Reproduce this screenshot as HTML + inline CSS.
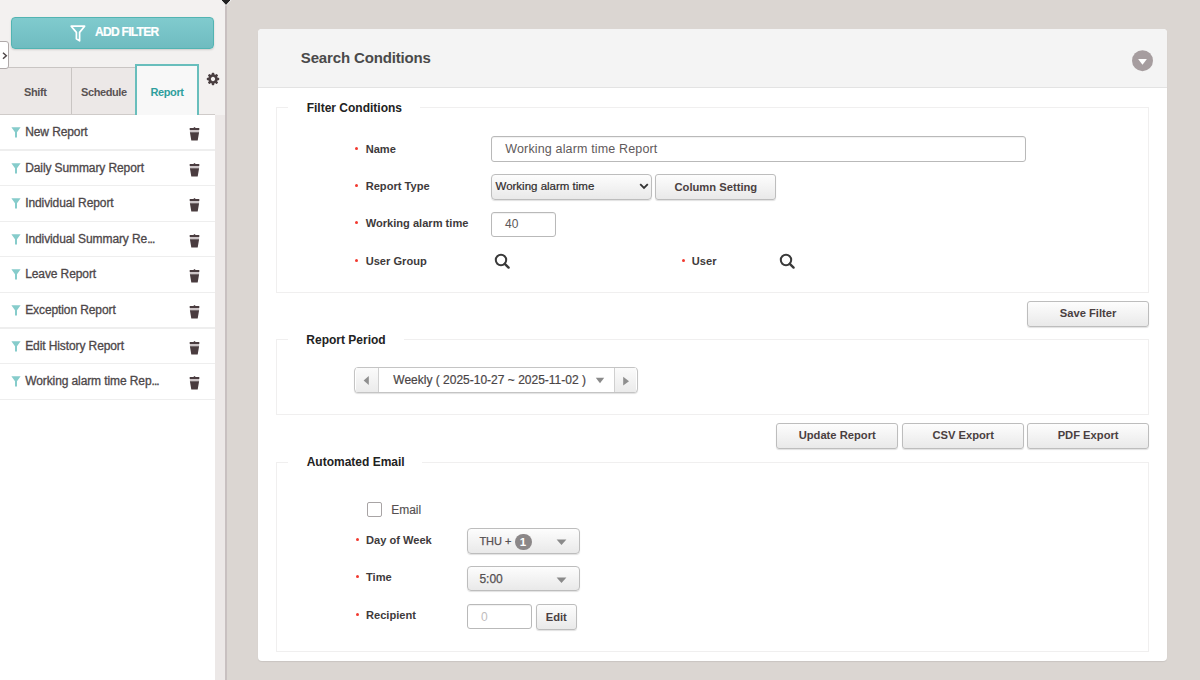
<!DOCTYPE html>
<html><head><meta charset="utf-8">
<style>
*{box-sizing:border-box;margin:0;padding:0}
html,body{width:1200px;height:680px;overflow:hidden;background:#dbd6d2;font-family:"Liberation Sans",sans-serif;position:relative}
.a{position:absolute}
.t{position:absolute;line-height:1;white-space:nowrap}
#side{left:0;top:0;width:226px;height:680px;background:#f3f1f0}
#sline{left:225px;top:0;width:2px;height:680px;background:#c8c0c0}
#strip{left:215px;top:115px;width:10px;height:565px;background:#ece8e7}
#addbtn{left:11px;top:16.8px;width:203.3px;height:31.9px;border:1.8px solid #52b4b2;border-radius:4px;background:linear-gradient(#80cbce,#6fbcc0);box-shadow:0 1px 2px rgba(0,0,0,.15)}
.tab{top:66.5px;height:48.5px;background:#ece8e7;border-top:1px solid #c9c5c3;border-right:1px solid #c9c5c3}
.tabtx{font-size:11px;font-weight:700;color:#5a5354;letter-spacing:-0.4px}
#list{left:0;top:115px;width:215px;height:565px;background:#fff}
.row{left:0;width:215px;height:1.4px;background:#eeeeee}
.item{font-size:12px;color:#4d4749;letter-spacing:-0.1px;-webkit-text-stroke:0.3px #4d4749}
.panel{left:258px;top:29px;width:909px;height:632px;background:#fff;border-radius:4px;box-shadow:0 1px 1px rgba(0,0,0,.08)}
.fs{border:1px solid #f0efef}
.leg{font-size:12px;font-weight:700;color:#222}
.lab{font-size:11.2px;font-weight:700;color:#3e3a3b}
.dot{width:3px;height:3px;border-radius:50%;background:#f2392f}
.inp{border:1px solid #b9b9b9;border-radius:3px;background:#fff;box-shadow:inset 0 1px 1px rgba(0,0,0,.06)}
.btn{border:1px solid #bdbdbd;border-radius:3px;background:linear-gradient(#fdfdfd,#e9e9e9);box-shadow:0 1px 1px rgba(0,0,0,.12)}
.btx{font-size:11.2px;font-weight:700;color:#4a3f41;text-align:center}
</style></head><body>
<!-- sidebar -->
<div class="a" id="side"></div>
<div class="a" id="list"></div>
<div class="a" id="strip"></div>
<div class="a" id="sline"></div>
<svg class="a" style="left:219px;top:0" width="14" height="7" viewBox="0 0 14 7"><path d="M1 -1 L13 -1 L7 5.5 Z" fill="#222" stroke="#fff" stroke-width="1"/></svg>

<div class="a" id="addbtn"></div>
<svg class="a" style="left:70px;top:25px" width="16" height="17" viewBox="0 0 16 17"><path d="M1.2 1.2 H14.6 L9.6 7.4 V15.8 L6.4 13.8 V7.4 Z" fill="none" stroke="#fff" stroke-width="1.7" stroke-linejoin="round"/></svg>
<div class="t" style="left:95px;top:25.9px;font-size:12px;font-weight:700;color:#fff;letter-spacing:-0.7px;-webkit-text-stroke:0.2px #fff">ADD FILTER</div>

<!-- tabs -->
<div class="a tab" style="left:0;width:72px"></div>
<div class="a tab" style="left:72px;width:63.5px"></div>
<div class="a" style="left:0;top:114px;width:215px;height:1.3px;background:#cfcbc9"></div>
<div class="a" style="left:135.2px;top:64.2px;width:63.5px;height:51px;background:#f8f8f8;border:2px solid #68bebc;border-bottom:none"></div>
<div class="t tabtx" style="left:24px;top:86.7px">Shift</div>
<div class="t tabtx" style="left:81px;top:86.7px">Schedule</div>
<div class="t tabtx" style="left:150.5px;top:86.7px;color:#2f9f9d">Report</div>
<svg class="a" style="left:205.8px;top:72px" width="14" height="14" viewBox="-7 -7 14 14"><circle r="3.45" fill="none" stroke="#4a3f41" stroke-width="2.6"/><g fill="#4a3f41"><rect x="-1.25" y="-6.2" width="2.5" height="3" rx="0.7" transform="rotate(0)"/><rect x="-1.25" y="-6.2" width="2.5" height="3" rx="0.7" transform="rotate(45)"/><rect x="-1.25" y="-6.2" width="2.5" height="3" rx="0.7" transform="rotate(90)"/><rect x="-1.25" y="-6.2" width="2.5" height="3" rx="0.7" transform="rotate(135)"/><rect x="-1.25" y="-6.2" width="2.5" height="3" rx="0.7" transform="rotate(180)"/><rect x="-1.25" y="-6.2" width="2.5" height="3" rx="0.7" transform="rotate(225)"/><rect x="-1.25" y="-6.2" width="2.5" height="3" rx="0.7" transform="rotate(270)"/><rect x="-1.25" y="-6.2" width="2.5" height="3" rx="0.7" transform="rotate(315)"/></g></svg>

<!-- toggle -->
<div class="a" style="left:-4px;top:41px;width:13.4px;height:28px;background:#fff;border:1px solid #b0aaaa;border-radius:3px"></div>
<svg class="a" style="left:2px;top:51.5px" width="6" height="8" viewBox="0 0 6 8"><path d="M1 0.8 L4.3 3.8 L1 6.8" fill="none" stroke="#4f4748" stroke-width="1.5"/></svg>

<!-- list -->
<div id="items">
<svg class="a" style="left:11px;top:127.00px" width="10" height="11" viewBox="0 0 10 11"><path d="M0.4 0.2 H9.6 L6 5.2 V10.6 H4 V5.2 Z" fill="#86cccb"/></svg>
<div class="t item" style="left:25.2px;top:126.04px">New Report</div>
<svg class="a" style="left:189px;top:127.00px" width="11" height="14" viewBox="0 0 11 14"><rect x="0.9" y="3" width="9.2" height="2.2" fill="#cdc5c7"/><path d="M0.7 1 H4.3 L5.5 0.1 L6.7 1 H10.3 V3.1 H0.7 Z M0.9 5.2 H10.1 L8.7 13.6 H2.3 Z" fill="#4a3c3f"/></svg>
<div class="a row" style="top:149.30px"></div>
<svg class="a" style="left:11px;top:162.60px" width="10" height="11" viewBox="0 0 10 11"><path d="M0.4 0.2 H9.6 L6 5.2 V10.6 H4 V5.2 Z" fill="#86cccb"/></svg>
<div class="t item" style="left:25.2px;top:161.64px">Daily Summary Report</div>
<svg class="a" style="left:189px;top:162.60px" width="11" height="14" viewBox="0 0 11 14"><rect x="0.9" y="3" width="9.2" height="2.2" fill="#cdc5c7"/><path d="M0.7 1 H4.3 L5.5 0.1 L6.7 1 H10.3 V3.1 H0.7 Z M0.9 5.2 H10.1 L8.7 13.6 H2.3 Z" fill="#4a3c3f"/></svg>
<div class="a row" style="top:184.90px"></div>
<svg class="a" style="left:11px;top:198.20px" width="10" height="11" viewBox="0 0 10 11"><path d="M0.4 0.2 H9.6 L6 5.2 V10.6 H4 V5.2 Z" fill="#86cccb"/></svg>
<div class="t item" style="left:25.2px;top:197.24px">Individual Report</div>
<svg class="a" style="left:189px;top:198.20px" width="11" height="14" viewBox="0 0 11 14"><rect x="0.9" y="3" width="9.2" height="2.2" fill="#cdc5c7"/><path d="M0.7 1 H4.3 L5.5 0.1 L6.7 1 H10.3 V3.1 H0.7 Z M0.9 5.2 H10.1 L8.7 13.6 H2.3 Z" fill="#4a3c3f"/></svg>
<div class="a row" style="top:220.50px"></div>
<svg class="a" style="left:11px;top:233.80px" width="10" height="11" viewBox="0 0 10 11"><path d="M0.4 0.2 H9.6 L6 5.2 V10.6 H4 V5.2 Z" fill="#86cccb"/></svg>
<div class="t item" style="left:25.2px;top:232.84px">Individual Summary Re<span style="letter-spacing:-0.9px">...</span></div>
<svg class="a" style="left:189px;top:233.80px" width="11" height="14" viewBox="0 0 11 14"><rect x="0.9" y="3" width="9.2" height="2.2" fill="#cdc5c7"/><path d="M0.7 1 H4.3 L5.5 0.1 L6.7 1 H10.3 V3.1 H0.7 Z M0.9 5.2 H10.1 L8.7 13.6 H2.3 Z" fill="#4a3c3f"/></svg>
<div class="a row" style="top:256.10px"></div>
<svg class="a" style="left:11px;top:269.40px" width="10" height="11" viewBox="0 0 10 11"><path d="M0.4 0.2 H9.6 L6 5.2 V10.6 H4 V5.2 Z" fill="#86cccb"/></svg>
<div class="t item" style="left:25.2px;top:268.44px">Leave Report</div>
<svg class="a" style="left:189px;top:269.40px" width="11" height="14" viewBox="0 0 11 14"><rect x="0.9" y="3" width="9.2" height="2.2" fill="#cdc5c7"/><path d="M0.7 1 H4.3 L5.5 0.1 L6.7 1 H10.3 V3.1 H0.7 Z M0.9 5.2 H10.1 L8.7 13.6 H2.3 Z" fill="#4a3c3f"/></svg>
<div class="a row" style="top:291.70px"></div>
<svg class="a" style="left:11px;top:305.00px" width="10" height="11" viewBox="0 0 10 11"><path d="M0.4 0.2 H9.6 L6 5.2 V10.6 H4 V5.2 Z" fill="#86cccb"/></svg>
<div class="t item" style="left:25.2px;top:304.04px">Exception Report</div>
<svg class="a" style="left:189px;top:305.00px" width="11" height="14" viewBox="0 0 11 14"><rect x="0.9" y="3" width="9.2" height="2.2" fill="#cdc5c7"/><path d="M0.7 1 H4.3 L5.5 0.1 L6.7 1 H10.3 V3.1 H0.7 Z M0.9 5.2 H10.1 L8.7 13.6 H2.3 Z" fill="#4a3c3f"/></svg>
<div class="a row" style="top:327.30px"></div>
<svg class="a" style="left:11px;top:340.60px" width="10" height="11" viewBox="0 0 10 11"><path d="M0.4 0.2 H9.6 L6 5.2 V10.6 H4 V5.2 Z" fill="#86cccb"/></svg>
<div class="t item" style="left:25.2px;top:339.64px">Edit History Report</div>
<svg class="a" style="left:189px;top:340.60px" width="11" height="14" viewBox="0 0 11 14"><rect x="0.9" y="3" width="9.2" height="2.2" fill="#cdc5c7"/><path d="M0.7 1 H4.3 L5.5 0.1 L6.7 1 H10.3 V3.1 H0.7 Z M0.9 5.2 H10.1 L8.7 13.6 H2.3 Z" fill="#4a3c3f"/></svg>
<div class="a row" style="top:362.90px"></div>
<svg class="a" style="left:11px;top:376.20px" width="10" height="11" viewBox="0 0 10 11"><path d="M0.4 0.2 H9.6 L6 5.2 V10.6 H4 V5.2 Z" fill="#86cccb"/></svg>
<div class="t item" style="left:25.2px;top:375.24px">Working alarm time Rep<span style="letter-spacing:-0.9px">...</span></div>
<svg class="a" style="left:189px;top:376.20px" width="11" height="14" viewBox="0 0 11 14"><rect x="0.9" y="3" width="9.2" height="2.2" fill="#cdc5c7"/><path d="M0.7 1 H4.3 L5.5 0.1 L6.7 1 H10.3 V3.1 H0.7 Z M0.9 5.2 H10.1 L8.7 13.6 H2.3 Z" fill="#4a3c3f"/></svg>
<div class="a row" style="top:398.50px"></div>
</div>

<!-- panel -->
<div class="a panel"></div>
<div class="a" style="left:258px;top:29px;width:909px;height:59px;background:#f4f4f4;border-bottom:1px solid #e3e3e3;border-radius:4px 4px 0 0"></div>
<div class="t" style="left:300.8px;top:50.3px;font-size:15px;font-weight:700;color:#4a4a4a;letter-spacing:-0.15px">Search Conditions</div>
<svg class="a" style="left:1132px;top:50px" width="22" height="22" viewBox="0 0 22 22"><circle cx="10.5" cy="10.7" r="10.5" fill="#a69d9f"/><path d="M6.1 9.1 H14.9 L10.5 14.7 Z" fill="#fff"/></svg>

<div class="a fs" style="left:276.2px;top:106.6px;width:873px;height:186px;"></div>
<div class="a " style="left:288.3px;top:104.6px;width:131.7px;height:4.0px;background:#fff"></div>
<div class="a fs" style="left:276.2px;top:338.6px;width:873px;height:76.4px;"></div>
<div class="a " style="left:288.3px;top:336.6px;width:115.7px;height:4.0px;background:#fff"></div>
<div class="a fs" style="left:276.2px;top:462.2px;width:873px;height:189.4px;"></div>
<div class="a " style="left:288.3px;top:460.2px;width:134.2px;height:4.0px;background:#fff"></div>
<div class="t leg" style="left:306.7px;top:101.54px;font-size:12px;">Filter Conditions</div>
<div class="t leg" style="left:306.3px;top:333.94px;font-size:12px;">Report Period</div>
<div class="t leg" style="left:306.7px;top:456.04px;font-size:12px;">Automated Email</div>
<div class="a dot" style="left:355.4px;top:146.8px"></div><div class="t lab" style="left:365.7px;top:143.80px;font-size:11.1px;">Name</div>
<div class="a dot" style="left:355.4px;top:183.8px"></div><div class="t lab" style="left:365.7px;top:180.80px;font-size:11.1px;">Report Type</div>
<div class="a dot" style="left:355.4px;top:221.4px"></div><div class="t lab" style="left:365.7px;top:218.40px;font-size:11.1px;">Working alarm time</div>
<div class="a dot" style="left:355.4px;top:259.0px"></div><div class="t lab" style="left:365.7px;top:256.00px;font-size:11.1px;">User Group</div>
<div class="a dot" style="left:681.5px;top:259.0px"></div><div class="t lab" style="left:691.8px;top:256.00px;font-size:11.1px;">User</div>
<div class="a dot" style="left:355.7px;top:538.2px"></div><div class="t lab" style="left:366px;top:535.20px;font-size:11.1px;">Day of Week</div>
<div class="a dot" style="left:355.7px;top:575.2px"></div><div class="t lab" style="left:366px;top:572.20px;font-size:11.1px;">Time</div>
<div class="a dot" style="left:355.7px;top:613.2px"></div><div class="t lab" style="left:366px;top:610.20px;font-size:11.1px;">Recipient</div>
<div class="a inp" style="left:490.5px;top:136px;width:535.3px;height:25.8px;"></div>
<div class="t " style="left:505.3px;top:143.0px;font-size:12.5px;color:#5f5a5b;letter-spacing:0.15px">Working alarm time Report</div>
<div class="a btn" style="left:490.7px;top:174px;width:161.3px;height:26.0px;border-radius:4px"></div>
<div class="t " style="left:495.5px;top:181.4px;font-size:11.5px;color:#2f2b2c;-webkit-text-stroke:0.2px #2f2b2c">Working alarm time</div>
<svg class="a" style="left:639px;top:183px" width="10" height="7" viewBox="0 0 10 7"><path d="M1.2 1.2 L5 5 L8.8 1.2" fill="none" stroke="#333" stroke-width="1.8"/></svg>
<div class="a btn" style="left:655.2px;top:174px;width:121.3px;height:26.0px;"></div><div class="t btx" style="left:655.2px;width:121.3px;top:181.82px;font-size:11.2px">Column Setting</div>
<div class="a inp" style="left:490.7px;top:211.6px;width:65.3px;height:25.7px;"></div>
<div class="t " style="left:505px;top:217.54px;font-size:12px;color:#5c5758">40</div>
<svg class="a" style="left:493.3px;top:252.3px" width="18" height="18" viewBox="0 0 18 18"><circle cx="8" cy="8" r="5.2" fill="none" stroke="#3a3a3a" stroke-width="2"/><path d="M11.8 11.8 L15.6 15.6" stroke="#3a3a3a" stroke-width="2.4" stroke-linecap="round"/></svg>
<svg class="a" style="left:778.0px;top:252.3px" width="18" height="18" viewBox="0 0 18 18"><circle cx="8" cy="8" r="5.2" fill="none" stroke="#3a3a3a" stroke-width="2"/><path d="M11.8 11.8 L15.6 15.6" stroke="#3a3a3a" stroke-width="2.4" stroke-linecap="round"/></svg>
<div class="a btn" style="left:1027.2px;top:300.5px;width:121.8px;height:26.3px;"></div><div class="t btx" style="left:1027.5px;width:121.2px;top:308.02px;font-size:11.2px">Save Filter</div>
<div class="a inp" style="left:354.2px;top:367.2px;width:283.8px;height:26px;border-radius:4px;border-color:#c4c4c4;box-shadow:0 1px 1px rgba(0,0,0,.12)"></div>
<div class="a " style="left:355.7px;top:368.4px;width:22.9px;height:23.8px;background:linear-gradient(#fbfbfb,#ebebeb);border-right:1px solid #d0d0d0"></div>
<div class="a " style="left:614.2px;top:368.4px;width:22.3px;height:23.8px;background:linear-gradient(#fbfbfb,#ebebeb);border-left:1px solid #d0d0d0"></div>
<svg class="a" style="left:362px;top:375px" width="8" height="11" viewBox="0 0 8 11"><path d="M6.8 1 V10 L1.6 5.5 Z" fill="#8f8f8f"/></svg>
<svg class="a" style="left:621.5px;top:376px" width="8" height="11" viewBox="0 0 8 11"><path d="M1.2 0.8 V9.6 L7 5.2 Z" fill="#8f8f8f"/></svg>
<div class="t " style="left:393.3px;top:374.04px;font-size:12px;color:#4a4546;-webkit-text-stroke:0.2px #4a4546">Weekly ( 2025-10-27 ~ 2025-11-02 )</div>
<svg class="a" style="left:594.5px;top:376.5px" width="10" height="7" viewBox="0 0 10 7"><path d="M0.8 0.8 H9.2 L5 6.2 Z" fill="#8a8a8a"/></svg>
<div class="a btn" style="left:776.2px;top:423px;width:121.8px;height:26px;"></div><div class="t btx" style="left:776.4px;width:121.6px;top:430.42px;font-size:11.2px">Update Report</div>
<div class="a btn" style="left:902.2px;top:423px;width:121.8px;height:26px;"></div><div class="t btx" style="left:902.4px;width:121.6px;top:430.42px;font-size:11.2px">CSV Export</div>
<div class="a btn" style="left:1027.2px;top:423px;width:121.8px;height:26px;"></div><div class="t btx" style="left:1027.5px;width:121.2px;top:430.42px;font-size:11.2px">PDF Export</div>
<div class="a " style="left:366.5px;top:502px;width:15.0px;height:14.5px;border:1px solid #a8a4a5;border-radius:2px;background:#fff"></div>
<div class="t " style="left:391.2px;top:503.64px;font-size:12px;color:#555051;-webkit-text-stroke:0.15px #555051">Email</div>
<div class="a btn" style="left:467.2px;top:528px;width:113px;height:26.4px;border-radius:4px"></div>
<div class="t " style="left:479.4px;top:535.94px;font-size:11px;color:#555051;-webkit-text-stroke:0.25px #555051">THU +</div>
<div class="a" style="left:515.2px;top:533.5px;width:16.5px;height:16.5px;border-radius:50%;background:#8b8788"></div>
<div class="t " style="left:519.8px;top:536.77px;font-size:11.5px;color:#fff;font-weight:700">1</div>
<svg class="a" style="left:555.5px;top:539px" width="11" height="7" viewBox="0 0 11 7"><path d="M0.6 0.6 H10.4 L5.5 6 Z" fill="#8a8a8a"/></svg>
<div class="a btn" style="left:467.2px;top:566px;width:113px;height:25.4px;border-radius:4px"></div>
<div class="t " style="left:479.4px;top:572.84px;font-size:12px;color:#555051;-webkit-text-stroke:0.25px #555051">5:00</div>
<svg class="a" style="left:555.5px;top:576.5px" width="11" height="7" viewBox="0 0 11 7"><path d="M0.6 0.6 H10.4 L5.5 6 Z" fill="#8a8a8a"/></svg>
<div class="a inp" style="left:467.2px;top:603.6px;width:65.1px;height:25.4px;"></div>
<div class="t " style="left:481px;top:611.14px;font-size:12px;color:#c0bcbd">0</div>
<div class="a btn" style="left:535.6px;top:604.2px;width:41.4px;height:25.8px;"></div><div class="t btx" style="left:535.6px;width:41.4px;top:611.52px;font-size:11.2px">Edit</div>
</body></html>
